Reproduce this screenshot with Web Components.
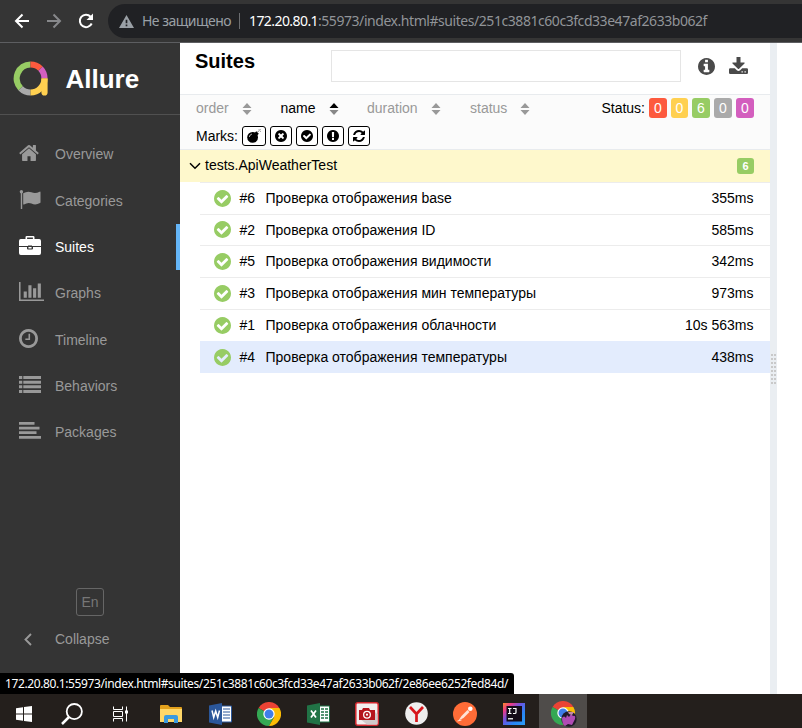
<!DOCTYPE html>
<html lang="en">
<head>
<meta charset="utf-8">
<title>Allure Report</title>
<style>
html,body{margin:0;height:100%;overflow:hidden}
body{font:14px/18px "Liberation Sans",Arial,sans-serif;color:#000}
</style>
</head>
<body>
<desktop-screen></desktop-screen>
<script>
const disc = 'q0 209-103 385.5t-279.5 279.5-385.5 103-385.5-103-279.5-279.5-103-385.5 103-385.5 279.5-279.5 385.5-103 385.5 103 279.5 279.5 103 385.5z';
const p = d => `<path d="${d}"/>`;
// name: [viewBox, width, height, markup]
const ICONS = {
  home: ['64 253 1664 1283', 20, 16, p('M1472 992v480q0 26-19 45t-45 19h-384v-384h-256v384h-384q-26 0-45-19t-19-45v-480q0-1 .5-3t.5-3l575-474 575 474q1 2 1 6zm223-69l-62 74q-8 9-21 11h-3q-13 0-21-7l-692-577-692 577q-12 8-24 7-13-2-21-11l-62-74q-8-10-7-23.5t11-21.5l719-599q32-26 76-26t76 26l244 204v-195q0-14 9-23t23-9h192q14 0 23 9t9 23v408l219 182q10 8 11 21.5t-7 23.5z')],
  flag: ['0 0 22 19', 22, 19, '<circle cx="2.4" cy="1.7" r="1.7"/><path d="M1.8 2h1.4v17H1.800zM4.200 3.300Q8.500.600 12.400 2.300q4 1.900 8.200-.6.900-.5.900.5v10q0 .6-.5.9-4.500 2.500-8.500.5-3.500-1.600-7.500.9-.8.3-.8-.5z"/>'],
  briefcase: ['0 0 24 19', 24, 19, '<path fill-rule="evenodd" d="M7.500 3V1.300Q7.500 0 8.800 0h6.400q1.300 0 1.300 1.300V3h4.700Q23 3 23 4.900V10H14V9.600H10V10H1V4.900Q1 3 2.800 3zm1.600 0h5.800V1.500H9.100zM1 11h8v1.500q0 1 1 1h4q1 0 1-1V11h8v6q0 2-1.800 2H2.800Q1 19 1 17zM10.400 11h3.200v1.400h-3.200z"/>'],
  chart: ['0 128 2048 1536', 25, 19, p('M640 896v512h-256v-512h256zm384-512v1024h-256v-1024h256zm1024 1152v128h-2048v-1536h128v1408h1920zm-640-896v768h-256v-768h256zm384-384v1152h-256v-1152h256z')],
  clock: ['128 128 1536 1536', 19, 19, p('M1024 544v448q0 14-9 23t-23 9h-320q-14 0-23-9t-9-23v-64q0-14 9-23t23-9h224v-352q0-14 9-23t23-9h64q14 0 23 9t9 23zm416 352q0-148-73-273t-198-198-273-73-273 73-198 198-73 273 73 273 198 198 273 73 273-73 198-198 73-273zm224 0'+disc)],
  list: ['0 0 22 17', 22, 17, p('M0 0h3.300v3H0zM4.300 0H22v3H4.300zM0 4.700h3.300v3H0zM4.300 4.700H22v3H4.300zM0 9.300h3.300v3H0zM4.300 9.300H22v3H4.300zM0 14h3.300v3H0zM4.300 14H22v3H4.300z')],
  align: ['0 0 22 17', 22, 17, p('M0 0h15.500v2.800H0zM0 4.700h20.500v2.800H0zM0 9.300h17.500v2.800H0zM0 14h22v2.800H0z')],
  left: ['0 0 8 13', 8, 13, '<path d="M7 1 1.500 6.500 7 12" fill="none" stroke="currentColor" stroke-width="1.900"/>'],
  down: ['0 0 12 8', 12, 8, '<path d="M1 1.200 6 6.200 11 1.200" fill="none" stroke="currentColor" stroke-width="1.500"/>'],
  check: ['128 128 1536 1536', 17, 17, p('M1412 734q0-28-18-46l-91-90q-19-19-45-19t-45 19l-408 407-226-226q-19-19-45-19t-45 19l-91 90q-18 18-18 46 0 27 18 45l362 362q19 19 45 19 27 0 46-19l543-543q18-18 18-45zm252 162'+disc)],
  times: ['128 128 1536 1536', 12, 12, p('M1277 1122q0-26-19-45l-181-181 181-181q19-19 19-45 0-27-19-46l-90-90q-19-19-46-19-26 0-45 19l-181 181-181-181q-19-19-45-19-27 0-46 19l-90 90q-19 19-19 46 0 26 19 45l181 181-181 181q-19 19-19 45 0 27 19 46l90 90q19 19 46 19 26 0 45-19l181-181 181 181q19 19 45 19 27 0 46-19l90-90q19-19 19-46zm387-226'+disc)],
  alert: ['128 128 1536 1536', 12, 12, p('M896 128q209 0 385.500 103t279.500 279.500 103 385.500-103 385.500-279.500 279.500-385.500 103-385.500-103-279.500-279.500-103-385.500 103-385.500 279.500-279.500 385.500-103zm128 1247v-190q0-14-9-23.500t-22-9.500h-192q-13 0-23 10t-10 23v190q0 13 10 23t23 10h192q13 0 22-9.500t9-23.500zm-2-344l18-621q0-12-10-18-10-8-24-8h-220q-14 0-24 8-10 6-10 18l17 621q0 10 10 17.500t24 7.500h185q14 0 23.500-7.500t10.500-17.500z')],
  refresh: ['128 128 1536 1536', 12, 12, p('M1639 1056q0 5-1 7-64 268-268 434.500t-478 166.500q-146 0-282.500-55t-243.500-157l-129 129q-19 19-45 19t-45-19-19-45v-448q0-26 19-45t45-19h448q26 0 45 19t19 45-19 45l-137 137q71 66 161 102t187 36q134 0 250-65t186-179q11-17 53-117 8-23 30-23h192q13 0 22.500 9.500t9.500 22.500zm25-800v448q0 26-19 45t-45 19h-448q-26 0-45-19t-19-45 19-45l138-138q-148-137-349-137-134 0-250 65t-186 179q-11 17-53 117-8 23-30 23h-199q-13 0-22.500-9.500t-9.500-22.500v-7q65-268 270-434.500t480-166.500q146 0 284 55.500t245 156.500l130-129q19-19 45-19t45 19 19 45z')],
  bomb: ['0 0 14 14', 14, 14, '<circle cx="5.600" cy="8.400" r="5.400"/><path d="m7.800 3.800 1.500-1.500 2.500 2.500-1.500 1.500z"/><path d="M2.300 8q.3-2.500 2.700-3" stroke="#fff" stroke-width=".7" fill="none"/><path d="M10.500 3.200q1-1.500 1.700-1.500M12 .3l.3.800M13.500.400l-.7.800M13.800 2.500l-1-.5" stroke="currentColor" stroke-width=".7" fill="none" opacity=".7"/>'],
  info: ['128 128 1536 1536', 17, 17, p('M1152 1376v-160q0-14-9-23t-23-9h-96v-512q0-14-9-23t-23-9h-320q-14 0-23 9t-9 23v160q0 14 9 23t23 9h96v320h-96q-14 0-23 9t-9 23v160q0 14 9 23t23 9h448q14 0 23-9t9-23zm-128-896v-160q0-14-9-23t-23-9h-192q-14 0-23 9t-9 23v160q0 14 9 23t23 9h192q14 0 23-9t9-23zm640 416'+disc)],
  download: ['0 0 19 17', 19, 17, '<path fill-rule="evenodd" d="M7.500 0h4v5.500h3.800q.6.300.2.900l-5.400 5.400q-.6.500-1.200 0L3.500 6.400q-.4-.6.200-.9h3.800zM1.200 11.200h4.600l2 2q1.700 1.500 3.400 0l2-2h4.600Q19 11.200 19 12.400v3.400Q19 17 17.800 17H1.200Q0 17 0 15.800v-3.400q0-1.200 1.200-1.200zM12.500 14.200v1.200h1.300v-1.200zm3 0v1.200h1.300v-1.200z"/>'],
  sort: ['0 0 10 12', 10, 12, '<path d="M5 0 9.500 5H.5zM5 12 .5 7h9z"/>'],
  sortup: ['0 0 10 12', 10, 12, '<path d="M5 0 9.500 5H.5z" fill="#000"/><path d="M5 12 .5 7h9z" fill="#888"/>'],
  logo: ['0 0 35 35', 35, 35, '<g fill="none" stroke-width="6.200"><path d="M7.700 27.300A14 14 0 0 1 17.500 3.500" stroke="#97cc64"/><path d="M17.500 3.500A14 14 0 0 1 27.500 7.600" stroke="#fd5a3e"/><path d="M27.500 7.600A14 14 0 0 1 31.500 17.500" stroke="#d35ebe"/><path d="M17.500 31.500A14 14 0 0 1 7.700 27.300" stroke="#aaa"/><path d="M31.500 17.500A14 14 0 0 1 17.500 31.500" stroke="#ffd050"/></g><path d="M28.400 17.500h6.200v14a3 3 0 0 1-6.200 0z" fill="#ffd050"/>'],
  back: ['0 0 16 16', 16, 16, '<path d="M15 8H2M8.500 1.500 2 8l6.500 6.500" fill="none" stroke="currentColor" stroke-width="2"/>'],
  forward: ['0 0 16 16', 16, 16, '<path d="M1 8h13M7.500 1.500 14 8l-6.500 6.500" fill="none" stroke="currentColor" stroke-width="2"/>'],
  reload: ['0 0 16 16', 16, 16, '<path d="M13.700 10.500A6.200 6.200 0 1 1 12.600 3.700" fill="none" stroke="currentColor" stroke-width="2"/><path d="M15 .500V7H8.500z"/>'],
  warn: ['0 0 16 14', 15, 13, '<path fill-rule="evenodd" d="M8 0 16 14H0zM7.100 5v4h1.800V5zm0 5.300v1.800h1.800v-1.800z"/>'],
  windows: ['0 0 16 16', 16, 16, p('M0 2.200 7 1.200V7.500H0zM8 1 16 0V7.500H8zM0 8.500h7v6.300L0 13.800zM8 8.500h8V16l-8-1z')],
  search: ['0 0 22 22', 22, 22, '<g fill="none" stroke="currentColor"><circle cx="13.300" cy="8.600" r="7.600" stroke-width="1.800"/><path d="M8 14 1 21" stroke-width="2.500"/></g>'],
  tasks: ['0 0 17 16', 17, 16, '<path d="M1.500.5v3h9v-3M1.500 15.500v-3h9v3M1.500 5.500h9v5h-9zM14.500.5v15" fill="none" stroke="currentColor"/><path d="M13 4.500h3v3h-3z"/>'],
  folder: ['0 0 22 18', 22, 18, '<path d="M0 1q0-1 1-1h7l2 2h11q1 0 1 1v14H0z" fill="#e3a11c"/><path d="M0 4h22v13H0z" fill="#ffd768"/><path d="M4 18v-6q0-2 2-2h10q2 0 2 2v6h-4v-4H8v4z" fill="#3b9ade"/>'],
  word: ['0 0 23 22', 23, 22, '<path d="M12 3h10.500v16H12z" fill="#fff" stroke="#2b579a"/><path d="M14 6h7M14 9h7M14 12h7M14 15h7" stroke="#2b579a"/><path d="M0 2.500 13 0v22L0 19.500z" fill="#2b579a"/><path d="m3 7.500 1.700 7L6.700 8l2 6.500 1.800-7" fill="none" stroke="#fff" stroke-width="1.500"/>'],
  excel: ['0 0 23 22', 23, 22, '<path d="M12 3h10.500v16H12z" fill="#fff" stroke="#217346"/><path d="M14 6h3M18 6h3M14 9h3M18 9h3M14 12h3M18 12h3M14 15h3M18 15h3" stroke="#217346" stroke-width="1.500"/><path d="M0 2.500 13 0v22L0 19.500z" fill="#217346"/><path d="m4 7.500 5 7M9 7.500l-5 7" stroke="#fff" stroke-width="1.700"/>'],
  chrome: ['-12 -12 24 24', 24, 24, '<path d="M0 0-10.400-6A12 12 0 0 1 10.400-6z" fill="#ea4335"/><path d="M0 0-10.400-6A12 12 0 0 0 0 12L5 3z" fill="#34a853"/><path d="M0-6H10.400A12 12 0 0 1 0 12L5.200 3z" fill="#fbbc05"/><circle r="5.700" fill="#fff"/><circle r="4.500" fill="#3f7ee8"/>'],
  chromeuser: ['-12 -12 26 26', 26, 26, '<path d="M0 0-10.400-6A12 12 0 0 1 10.400-6z" fill="#ea4335"/><path d="M0 0-10.400-6A12 12 0 0 0 0 12L5 3z" fill="#34a853"/><path d="M0-6H10.400A12 12 0 0 1 0 12L5.200 3z" fill="#fbbc05"/><circle r="5.700" fill="#fff"/><circle r="4.500" fill="#3f7ee8"/><circle cx="6" cy="6" r="7.700" fill="#211b29"/><path d="M-1 5q2-3 4 0l1-3 2 2 2-3 2 2q3-1 2 3l-3 6-4-1-3 2q-3-2-3-8z" fill="#b04cb4"/><path d="M5-1h6l-2 3-3-1z" fill="#c48ca8"/>'],
  camera: ['0 0 24 24', 24, 24, '<rect x=".8" y=".8" width="22.400" height="22.400" rx="2" fill="#f2eeee" stroke="#d3282f" stroke-width="1.500"/><path d="m19 9 3.500 3.500v10H12L5 17z" fill="#cfcaca"/><path d="M4 8h3l1-2h6l1 2h5v10H4z" fill="#b5151c"/><circle cx="12" cy="12.700" r="4" fill="#fff"/><circle cx="12" cy="12.700" r="2.700" fill="#b5151c"/><circle cx="12" cy="12.700" r="1.100" fill="#fff"/>'],
  yandex: ['0 0 23 23', 23, 23, '<circle cx="11.500" cy="11.500" r="11.300" fill="#eee"/><path d="m5 5 6.500 7L18 5M11.500 11.500V20" fill="none" stroke="#d7151b" stroke-width="2.700"/>'],
  postman: ['0 0 24 24', 24, 24, '<circle cx="12" cy="12" r="12" fill="#ff6c37"/><path d="m5.500 18.500 3-4.500 6-6 2 2-6 6z" fill="#ffe3d6"/><path d="M4.500 19l4-1" stroke="#ffe3d6"/><circle cx="17.300" cy="6.700" r="2.300" fill="#fff"/>'],
  idea: ['0 0 22 22', 22, 22, '<defs><linearGradient id="g" x1="0" y1="0" x2="1" y2="1"><stop offset="0" stop-color="#fc8a2a"/><stop offset=".2" stop-color="#ef3b86"/><stop offset=".42" stop-color="#6c54e0"/><stop offset=".7" stop-color="#2787f5"/><stop offset="1" stop-color="#2c9df5"/></linearGradient></defs><path d="M0 0h22v22H0z" fill="url(#g)"/><path d="M3.500 3h15.500v15.500H3.500z" fill="#150c18"/><path d="M5 5.500h3.500M6.700 5.500v5M5 10.500h3.500M10 5.500h3v4q0 1-1.200 1H10" stroke="#fff" stroke-width="1.200" fill="none"/><path d="M5 15h5v1.500H5z" fill="#ddd"/>']
};
const define = (name, css, html, after) => customElements.define(name, class extends HTMLElement {
  connectedCallback() {
    if (this.shadowRoot) return;
    const a = n => this.getAttribute(n) ?? '';
    this.attachShadow({mode: 'open'}).innerHTML = `<style>*{box-sizing:border-box}:host{box-sizing:border-box}${css}</style>` + html(a);
    if (after) after(this);
  }
});

define('ui-icon', ':host{display:inline-flex;flex:none}svg{display:block;fill:currentColor}', a => {
  const [vb, w, h, m] = ICONS[a('name')];
  return `<svg viewBox="${vb}" width="${a('w') || w}" height="${a('h') || h}" preserveAspectRatio="none">${m}</svg>`;
});
// One line of text whose tracking is adjusted to fill the given width.
define('fit-line', ':host{display:block;flex:none;white-space:nowrap}span{display:inline-block}', () => '<span><slot></slot></span>', el => {
  const s = el.shadowRoot.querySelector('span');
  const n = el.textContent.length, w = +el.getAttribute('w');
  s.style.letterSpacing = (w - s.getBoundingClientRect().width) / n + 'px';
  el.style.width = w + 'px';
});
define('browser-bar', `:host{display:flex;align-items:center;height:43px;background:#353535;border-bottom:1px solid #5d5e61;padding-left:14px;color:#fff;font:14px/20px "Noto Sans","Open Sans",sans-serif}
 .forward{color:#87888b;margin:0 16px}.box{display:flex;align-items:center;flex:1;height:34px;margin-left:14px;background:#202124;border-radius:17px 0 0 17px;padding-left:11px;color:#9aa0a6}
 .sep{width:1px;height:16px;background:#6b6d70;margin:0 9px 0 8px}.box ui-icon{margin-right:8px}.host{color:#fff}.rest{color:#919498}`,
 () => `<ui-icon name="back"></ui-icon><ui-icon class="forward" name="forward"></ui-icon><ui-icon name="reload"></ui-icon>
 <div class="box"><ui-icon name="warn"></ui-icon><fit-line w="89">Не защищено</fit-line><span class="sep"></span><fit-line class="host" w="69">172.20.80.1</fit-line><fit-line class="rest" w="389">:55973/index.html#suites/251c3881c60c3fcd33e47af2633b062f</fit-line></div>`);
define('nav-item', `:host{display:flex;align-items:center;height:46.330px;padding-left:19px;color:#999}:host([active]){color:#fff;border-right:4px solid #64b5f7}
 .i{width:36px;display:flex;padding-bottom:3px}:host([name=briefcase]) .i{margin-left:-1px;width:37px}`, a => `<span class="i"><ui-icon name="${a('name')}"></ui-icon></span><slot></slot>`);
define('side-nav', `:host{display:flex;flex-direction:column;width:180px;background:#343434;flex:none}
 .brand{display:flex;align-items:center;height:72px;border-bottom:1px solid #505050;padding-left:12.500px;gap:18px;color:#fff;font:bold 26px/30px "Liberation Sans",Arial,sans-serif;margin-bottom:16.150px}
 .lang{margin:auto auto 0;width:28px;height:28px;border:1px solid #666;border-radius:3px;color:#777;display:grid;place-items:center}
 .col{display:flex;align-items:center;height:46px;color:#999;padding-left:24px;gap:23px;margin-bottom:32px}`,
 () => `<div class="brand"><ui-icon name="logo"></ui-icon>Allure</div>
 <nav-item name="home">Overview</nav-item><nav-item name="flag">Categories</nav-item><nav-item name="briefcase" active>Suites</nav-item><nav-item name="chart">Graphs</nav-item><nav-item name="clock">Timeline</nav-item><nav-item name="list">Behaviors</nav-item><nav-item name="align">Packages</nav-item>
 <div class="lang">En</div><div class="col"><ui-icon name="left"></ui-icon>Collapse</div>`);
define('sort-item', ':host{display:flex;align-items:center;justify-content:space-between;color:#999}:host([on]){color:#000}ui-icon{margin-top:1px}', a => `<slot></slot><ui-icon name="${a('on') || 'sort'}"></ui-icon>`);
define('mark-button', ':host{display:grid;place-items:center;width:22px;height:20px;border:1px solid #000;border-radius:3px;background:#fff}:host([name=bomb]){width:24px}', a => `<ui-icon name="${a('name')}" ${a('name') === 'bomb' ? '' : 'w="12" h="12"'}></ui-icon>`);
define('count-label', ':host{display:grid;place-items:center;width:18px;height:20px;border-radius:3px;color:#fff;font-size:14px}:host([small]){width:17px;height:16px;font-size:11px;font-weight:bold;line-height:16px}', () => '<slot></slot>');
define('test-row', ':host{display:flex;align-items:center;border-top:1px solid #ececec;padding:0 16.500px 1px 13.500px}:host([selected]){background:#e3ecfd;border-color:#e3ecfd}ui-icon{color:#97cc64;margin-right:9px}.n{width:26px}.t{margin-left:auto}',
 a => `<ui-icon name="check"></ui-icon><span class="n">#${a('n')}</span><slot></slot><span class="t">${a('time')}</span>`);
define('suites-pane', `:host{display:flex;flex-direction:column;width:590px;flex:none;background:#fff}
 .head{display:flex;height:51px;padding-left:15px}.title{font:bold 20px/24px "Liberation Sans",Arial,sans-serif;width:136px;margin-top:6px}
 .input{width:350px;height:32px;border:1px solid #e5e5e5;margin:7px 17px 0 0}.head ui-icon{color:#4a4a4a;margin-top:15px}.head ui-icon+ui-icon{margin:14px 0 0 14px}
 .tools{height:56px;background:#fbfbfb;border:solid #e8ebee;border-width:1px 0;padding:3px 16px 0}
 .sorts{display:flex;height:20px;align-items:center}.sorts sort-item{margin-right:28px}.status{display:flex;gap:4px;margin-left:auto;align-items:center}
 .marks{display:flex;height:20px;margin-top:8px;align-items:center;gap:4px}.marks span{width:42px}
 .group{display:flex;align-items:center;height:32px;background:#fef8cc;padding:0 16px 0 9px;gap:4px}.group span{margin-top:-2px}.group ui-icon{margin-top:-1px}.group count-label{margin-left:auto}
 .rows{display:grid;grid-template-rows:32px 31px 32px 32px 32px 32px;margin-left:20px}`,
 () => `<div class="head"><div class="title">Suites</div><div class="input"></div><ui-icon name="info"></ui-icon><ui-icon name="download"></ui-icon></div>
 <div class="tools"><div class="sorts"><sort-item style="width:56px;margin-right:28.500px">order</sort-item><sort-item on="sortup" style="width:58px;margin-right:28.500px">name</sort-item><sort-item style="width:74px;margin-right:29px">duration</sort-item><sort-item style="width:60px">status</sort-item>
 <div class="status"><span>Status:</span><count-label style="background:#fd5a3e">0</count-label><count-label style="background:#ffd050;width:17px">0</count-label><count-label style="background:#97cc64">6</count-label><count-label style="background:#aaa">0</count-label><count-label style="background:#d35ebe">0</count-label></div></div>
 <div class="marks"><span>Marks:</span><mark-button name="bomb"></mark-button><mark-button name="times"></mark-button><mark-button name="check"></mark-button><mark-button name="alert"></mark-button><mark-button name="refresh"></mark-button></div></div>
 <div class="group"><ui-icon name="down"></ui-icon><span>tests.ApiWeatherTest</span><count-label small style="background:#97cc64">6</count-label></div>
 <div class="rows"><test-row n="6" time="355ms">Проверка отображения base</test-row><test-row n="2" time="585ms">Проверка отображения ID</test-row><test-row n="5" time="342ms">Проверка отображения видимости</test-row><test-row n="3" time="973ms">Проверка отображения мин температуры</test-row><test-row n="1" time="10s 563ms">Проверка отображения облачности</test-row><test-row n="4" time="438ms" selected>Проверка отображения температуры</test-row></div>`);
define('split-gutter', ':host{display:flex;width:7px;flex:none;background:#eaeef2;padding:311px 1px 0}i{width:5px;height:30px;background:repeating-linear-gradient(#0000 0 2px,#eaeef2 2px 4px),linear-gradient(90deg,#c9c9c9 2px,#0000 2px 3px,#c9c9c9 3px)}', () => '<i></i>');
define('link-status', ':host{position:absolute;left:0;bottom:0;width:514px;height:21px;background:#000;border-radius:0 3px 0 0;color:#fff;padding-left:5px;font:12px/21px "Noto Sans","Open Sans",sans-serif}', () => '<fit-line w="503">172.20.80.1:55973/index.html#suites/251c3881c60c3fcd33e47af2633b062f/2e86ee6252fed84d/</fit-line>');
define('task-bar', ':host{display:flex;height:34px;background:#241f1c;color:#fff}span{width:48px;margin-right:1px;height:34px;display:flex;align-items:center;justify-content:center;padding-top:5px}.search{padding-right:2px}.tasks{padding-right:3px}.on{background:#4f4c4a;padding-left:2px}',
 () => ['windows','search','tasks','folder','word','chrome','excel','camera','yandex','postman','idea','chromeuser'].map((n, i) => `<span class="${i === 11 ? 'on' : n}"><ui-icon name="${n}"></ui-icon></span>`).join(''));
define('desktop-screen', ':host{display:flex;flex-direction:column;width:802px;height:728px;overflow:hidden;background:#fff}.app{display:flex;flex:1;position:relative;min-height:0}',
 () => '<browser-bar></browser-bar><div class="app"><side-nav></side-nav><suites-pane></suites-pane><split-gutter></split-gutter><link-status></link-status></div><task-bar></task-bar>');
</script>
</body>
</html>
